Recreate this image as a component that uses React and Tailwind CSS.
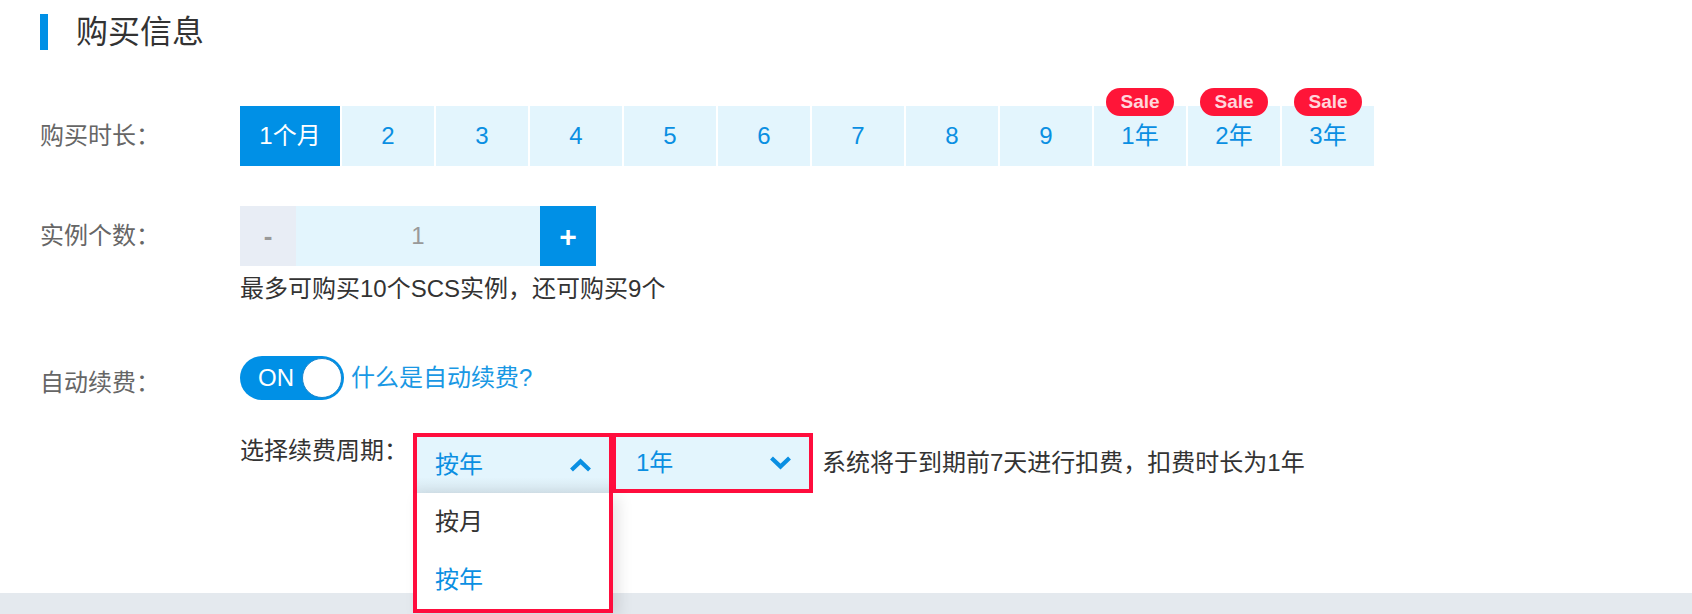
import React from "react";

const FONT = { fontFamily: '"Liberation Sans", "Noto Sans CJK SC", sans-serif' };

function Chevron({ up }) {
  return (
    <svg width="23" height="14" viewBox="0 0 23 14" fill="none">
      <polyline
        points={up ? "2.5,12 11.5,3.5 20.5,12" : "2.5,2 11.5,10.5 20.5,2"}
        stroke="#0a8fe2"
        strokeWidth="4.2"
        strokeLinecap="butt"
        strokeLinejoin="miter"
      />
    </svg>
  );
}

const durations = [
  { label: "1个月", active: true },
  { label: "2" },
  { label: "3" },
  { label: "4" },
  { label: "5" },
  { label: "6" },
  { label: "7" },
  { label: "8" },
  { label: "9" },
  { label: "1年", sale: true },
  { label: "2年", sale: true },
  { label: "3年", sale: true },
];

export default function App() {
  return (
    <div className="relative w-[1692px] h-[614px] overflow-hidden bg-white" style={FONT}>
      <div className="px-[40px] pt-[14px]">
        {/* Title */}
        <div className="flex items-center">
          <div className="w-[8px] h-[36px] bg-[#0090e6]" />
          <div className="ml-[28px] text-[32px] leading-[36px] text-[#333333]">购买信息</div>
        </div>

        {/* Duration */}
        <div className="flex mt-[56px]">
          <div className="w-[200px] text-[24px] leading-[60px] text-[#666666]">购买时长：</div>
          <div className="flex gap-[2px]">
            {durations.map((d, i) => (
              <div
                key={i}
                className={
                  "relative h-[60px] flex items-center justify-center text-[24px] " +
                  (i === 0 ? "w-[100px] " : "w-[92px] ") +
                  (d.active ? "bg-[#0090e6] text-white" : "bg-[#e3f5fd] text-[#0a8fe2]")
                }
              >
                {d.label}
                {d.sale && (
                  <div className="absolute top-[-18px] left-1/2 -translate-x-1/2 w-[68px] h-[28px] rounded-full bg-[#ff1538] text-[#ffd6dc] text-[19px] font-bold leading-[28px] text-center">
                    Sale
                  </div>
                )}
              </div>
            ))}
          </div>
        </div>

        {/* Instance count */}
        <div className="flex mt-[40px]">
          <div className="w-[200px] text-[24px] leading-[60px] text-[#666666]">实例个数：</div>
          <div>
            <div className="flex h-[60px]">
              <div className="w-[56px] bg-[#e8edf5] flex items-center justify-center text-[26px] font-bold text-[#999999]">-</div>
              <div className="w-[244px] bg-[#e3f5fd] flex items-center justify-center text-[24px] text-[#999999]">1</div>
              <div className="w-[56px] bg-[#0090e6] flex items-center justify-center text-[30px] font-semibold text-white">+</div>
            </div>
            <div className="mt-[5px] text-[24px] leading-[36px] text-[#333333]">
              最多可购买10个SCS实例，还可购买9个
            </div>
          </div>
        </div>

        {/* Auto renew */}
        <div className="flex items-start mt-[49px]">
          <div className="w-[200px] mt-[5px] text-[24px] leading-[44px] text-[#666666]">自动续费：</div>
          <div className="flex items-center h-[44px]">
            <div className="w-[104px] h-[44px] rounded-full bg-[#0090e6] flex items-center justify-between pl-[18px] pr-[2px]">
              <span className="text-white text-[24px] leading-[44px]">ON</span>
              <div className="w-[40px] h-[40px] rounded-full bg-white border border-[#1b86cc]" />
            </div>
            <span className="ml-[7px] text-[24px] leading-[44px] text-[#1a98e4]">什么是自动续费?</span>
          </div>
        </div>

        {/* Renewal period */}
        <div className="flex items-start mt-[28px] ml-[200px]">
          <div className="w-[173px] text-[24px] leading-[36px] text-[#333333]">选择续费周期：</div>
          <div className="relative z-10 w-[200px]">
            <div className="border-4 border-b-0 border-[#ff0d3d]">
              <div className="h-[56px] flex items-center justify-between pl-[18px] pr-[17px] bg-[linear-gradient(to_bottom,#e3f5fd_72%,#d5e4ec)]">
                <span className="text-[24px] text-[#0a8fe2]">按年</span>
                <Chevron up />
              </div>
            </div>
            <div className="absolute left-0 top-full w-[200px] border-4 border-t-0 border-[#ff0d3d] bg-white shadow-[6px_4px_14px_rgba(0,0,0,0.10)]">
              <div className="h-[58px] flex items-center pl-[18px] text-[24px] text-[#333333]">按月</div>
              <div className="h-[58px] flex items-center pl-[18px] text-[24px] text-[#0a8fe2]">按年</div>
            </div>
          </div>
          <div className="w-[201px] -ml-[1px] h-[60px] border-4 border-[#ff0d3d]">
            <div className="h-full flex items-center justify-between pl-[20px] pr-[17px] bg-[#e3f5fd]">
              <span className="text-[24px] text-[#0a8fe2]">1年</span>
              <Chevron />
            </div>
          </div>
          <div className="ml-[9px] text-[24px] leading-[60px] text-[#333333]">
            系统将于到期前7天进行扣费，扣费时长为1年
          </div>
        </div>
      </div>

      <div className="mt-[100px] h-[40px] bg-[#e4e9ee]" />
    </div>
  );
}
